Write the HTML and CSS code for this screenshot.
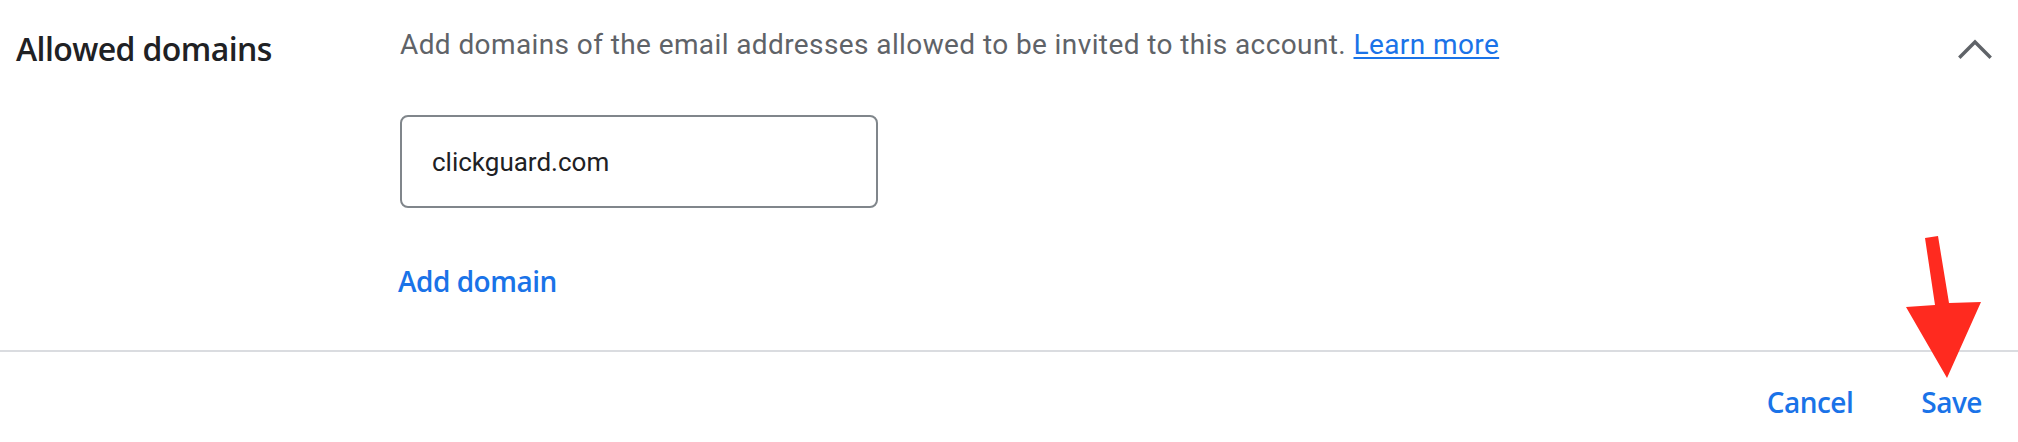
FILE: index.html
```html
<!DOCTYPE html>
<html>
<head>
<meta charset="utf-8">
<link rel="stylesheet" href="styles.css">
</head>
<body>
<div class="page">
  <section class="section">
    <div class="label">Allowed domains</div>
    <div class="content">
      <p class="desc">Add domains of the email addresses allowed to be invited to this account. <a class="link" href="#">Learn more</a></p>
      <div class="field"><span class="field-text">clickguard.com</span></div>
      <div class="add">Add domain</div>
    </div>
    <div class="toggle">
      <svg class="chevron" width="40" height="24" viewBox="0 0 40 24"><polyline points="5.5,19.5 20,5 34.5,19.5" fill="none" stroke="#5f6368" stroke-width="3.4" stroke-linecap="square"/></svg>
    </div>
  </section>
  <footer class="footer">
    <span class="btn">Cancel</span>
    <span class="btn">Save</span>
  </footer>
  <svg class="arrow" width="2018" height="442" viewBox="0 0 2018 442"><polygon points="1925,238 1938,236 1949,303 1981,302 1947,378 1906,307 1935,305" fill="#ff2a1f"/></svg>
</div>
</body>
</html>
```
FILE: styles.css
```css
html, body {
  margin: 0;
  padding: 0;
  background: #ffffff;
}
.page {
  position: relative;
  width: 2018px;
  height: 442px;
  overflow: hidden;
}
.section {
  display: grid;
  grid-template-columns: 400px 1fr auto;
  padding: 25px 23px 49px 0;
  border-bottom: 2px solid #dadce0;
}
.label {
  padding-left: 16px;
  margin-top: 4px;
  font-family: "Open Sans", sans-serif;
  font-weight: 600;
  font-size: 32px;
  line-height: 40px;
  letter-spacing: -0.6px;
  color: #202124;
}
.content {
  display: flex;
  flex-direction: column;
  align-items: flex-start;
}
.desc {
  margin: 0;
  font-family: Roboto, sans-serif;
  font-size: 28px;
  line-height: 40px;
  letter-spacing: 0.4px;
  color: #5f6368;
  white-space: nowrap;
}
.link {
  color: #1a73e8;
  text-decoration: underline;
  text-decoration-thickness: 2px;
  text-underline-offset: 3px;
}
.field {
  box-sizing: border-box;
  margin-top: 50px;
  width: 478px;
  height: 93px;
  border: 2px solid #80868b;
  border-radius: 8px;
  padding-left: 30px;
  display: flex;
  align-items: center;
}
.field-text {
  font-family: Roboto, sans-serif;
  font-size: 26px;
  line-height: 30px;
  color: #202124;
}
.add {
  margin-top: 53px;
  margin-left: -2px;
  font-family: "Open Sans", sans-serif;
  font-weight: 600;
  font-size: 28px;
  line-height: 40px;
  letter-spacing: -0.5px;
  color: #1a73e8;
}
.toggle {
  padding-top: 12px;
}
.chevron {
  display: block;
}
.footer {
  display: flex;
  justify-content: flex-end;
  gap: 68px;
  padding: 30px 36px 0 0;
}
.btn {
  font-family: "Open Sans", sans-serif;
  font-weight: 600;
  font-size: 28px;
  line-height: 40px;
  letter-spacing: -0.5px;
  color: #1a73e8;
}
.arrow {
  position: absolute;
  left: 0;
  top: 0;
  pointer-events: none;
}
```
